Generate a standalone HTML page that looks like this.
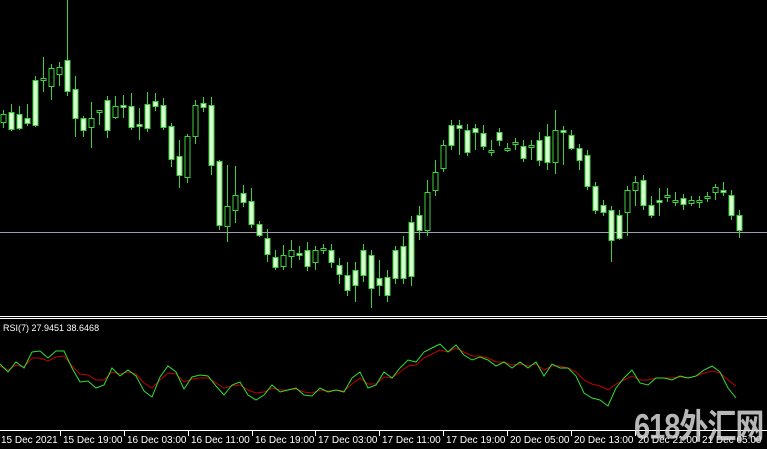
<!DOCTYPE html>
<html><head><meta charset="utf-8"><style>
html,body{margin:0;padding:0;background:#000;width:767px;height:448px;overflow:hidden}
svg{position:absolute;left:0;top:0}
.t{font-family:"Liberation Sans",sans-serif;font-size:10px;fill:#fff}
.wm{position:absolute;left:634px;top:406px;font:bold 29px "Liberation Sans","Noto Sans CJK SC",sans-serif;color:rgba(215,215,215,0.85);letter-spacing:-1px;line-height:36px;white-space:nowrap;transform:scaleY(1.2);transform-origin:0 0}
</style></head><body>
<svg id="s" width="767" height="448" xmlns="http://www.w3.org/2000/svg">
<line x1="0" y1="232.5" x2="767" y2="232.5" stroke="#9aa0b0" stroke-width="1"/>
<line x1="0" y1="316.5" x2="767" y2="316.5" stroke="#fff"/>
<line x1="0" y1="318.5" x2="767" y2="318.5" stroke="#fff"/>
<text x="3" y="331" class="t" style="font-size:9px">RSI(7) 27.9451 38.6468</text>
<polyline fill="none" stroke="#c00000" stroke-width="1" points="0,366 8,370 16,365 24,367 32,358 40,358 48,361 56,357 64,356 72,366 80,374 88,375 96,380 104,380 112,372 120,374 128,372 136,374 144,383 152,388 160,380 168,373 176,374 184,382 192,379 200,378 208,378 216,383 224,388 232,386 240,385 248,390 256,393 264,392 272,388 280,390 288,390 296,389 304,392 312,393 320,390 328,391 336,390 344,391 352,384 360,378 368,384 376,384 384,377 392,378 400,372 408,366 416,365 424,358 432,354 440,350 448,352 456,348 464,352 472,356 480,356 488,358 496,362 504,362 512,365 520,364 528,366 536,364 544,370 552,366 560,366 568,368 576,372 584,380 592,384 600,386 608,390 616,384 624,380 632,376 640,380 648,380 656,378 664,378 672,378 680,377 688,378 696,376 704,373 712,371 720,373 728,380 736,386"/>
<polyline fill="none" stroke="#30e030" stroke-width="1" points="0,364 8,372 16,362 24,368 32,352 40,351 48,358 56,351 64,351 72,368 80,382 88,381 96,388 104,385 112,368 120,376 128,370 136,376 144,391 152,397 160,377 168,366 176,372 184,389 192,377 200,375 208,376 216,386 224,395 232,385 240,382 248,395 256,400 264,395 272,385 280,392 288,390 296,388 304,395 312,396 320,388 328,392 336,390 344,392 352,378 360,372 368,388 376,385 384,372 392,378 400,368 408,360 416,362 424,352 432,348 440,344 448,352 456,345 464,355 472,360 480,357 488,360 496,366 504,362 512,368 520,362 528,368 536,362 544,376 552,364 560,368 568,368 576,376 584,393 592,398 600,400 608,406 616,388 624,378 632,370 640,383 648,385 656,378 664,378 672,380 680,376 688,378 696,376 704,370 712,366 720,372 728,388 736,398"/>
<line x1="0" y1="430.5" x2="767" y2="430.5" stroke="#fff"/>
</svg>
<div class="wm">618外汇网</div>
<script>
var s=document.getElementById('s'),NS='http://www.w3.org/2000/svg';
var c=[[122,114,110,128],[112,129,104,131],[114,128,106,130],[118,123,104,126],[80,125,76,127],[78,78,57,92],[86,68,64,100],[74,67,62,86],[60,91,0,96],[89,118,76,137],[118,130,116,137],[127,118,102,148],[110,110,118,125],[100,130,96,138],[117,106,96,119],[105,107,95,118],[106,127,93,130],[124,125,108,140],[104,128,92,132],[101,106,93,111],[105,127,98,130],[126,159,123,167],[156,175,140,188],[177,136,134,183],[136,105,100,144],[103,107,97,112],[105,165,97,175],[161,225,160,230],[226,206,165,242],[210,195,166,223],[193,202,185,207],[201,224,188,228],[224,235,221,237],[238,254,229,262],[257,267,250,270],[266,255,245,270],[256,250,240,268],[253,254,246,260],[250,266,242,271],[262,250,246,270],[250,248,244,254],[250,262,244,268],[265,274,258,284],[275,290,262,296],[270,285,262,302],[250,275,244,282],[255,288,250,308],[278,285,260,296],[277,295,270,302],[250,278,246,284],[246,278,236,284],[222,276,216,286],[215,230,206,240],[230,192,180,236],[190,172,160,196],[168,145,140,172],[125,145,120,150],[125,128,120,155],[130,152,124,156],[128,132,124,150],[133,146,125,150],[150,150,140,156],[132,140,128,146],[148,148,143,152],[142,142,138,150],[146,158,140,162],[145,145,140,160],[140,160,132,166],[136,162,124,170],[162,130,110,174],[130,132,126,165],[135,148,130,150],[148,160,144,170],[155,186,150,190],[186,210,182,214],[205,212,200,216],[210,240,206,262],[215,238,210,240],[212,190,186,236],[190,182,176,206],[180,205,175,210],[205,215,196,218],[200,202,188,216],[195,195,188,202],[200,200,192,206],[198,204,194,210],[203,200,196,206],[201,200,196,208],[196,196,192,202],[192,187,184,200],[190,192,182,196],[195,215,190,220],[215,230,210,238]];
var x0=3;
c.forEach(function(d,i){var x=x0+i*8.0,o=d[0],cl=d[1],h=Math.min(d[2],o,cl),l=Math.max(d[3],o,cl);
var w=document.createElementNS(NS,'line');w.setAttribute('x1',x+.5);w.setAttribute('x2',x+.5);w.setAttribute('y1',h);w.setAttribute('y2',l);w.setAttribute('stroke','#3cd23c');s.appendChild(w);
var r=document.createElementNS(NS,'rect');var t=Math.min(o,cl),b=Math.max(o,cl);if(b-t<2){b=t+2}
r.setAttribute('x',x-2);r.setAttribute('y',t+.5);r.setAttribute('width',5);r.setAttribute('height',b-t);
r.setAttribute('fill',cl>o?'#d8ffd0':'#000');r.setAttribute('stroke','#3cd23c');s.appendChild(r);});
var L=[["15 Dec 2021",1],["15 Dec 19:00",63],["16 Dec 03:00",127],["16 Dec 11:00",191],["16 Dec 19:00",255],["17 Dec 03:00",318],["17 Dec 11:00",382],["17 Dec 19:00",446],["20 Dec 05:00",510],["20 Dec 13:00",574],["20 Dec 21:00",638],["21 Dec 05:00",702]];
L.forEach(function(a,i){var t=document.createElementNS(NS,'text');t.setAttribute('x',a[1]);t.setAttribute('y',443);t.setAttribute('class','t');t.setAttribute('style','font-size:10px');t.textContent=a[0];s.appendChild(t);
if(i>0){var k=document.createElementNS(NS,'line');k.setAttribute('x1',a[1]-2.5);k.setAttribute('x2',a[1]-2.5);k.setAttribute('y1',431);k.setAttribute('y2',436);k.setAttribute('stroke','#fff');s.appendChild(k);}});
</script>
</body></html>
